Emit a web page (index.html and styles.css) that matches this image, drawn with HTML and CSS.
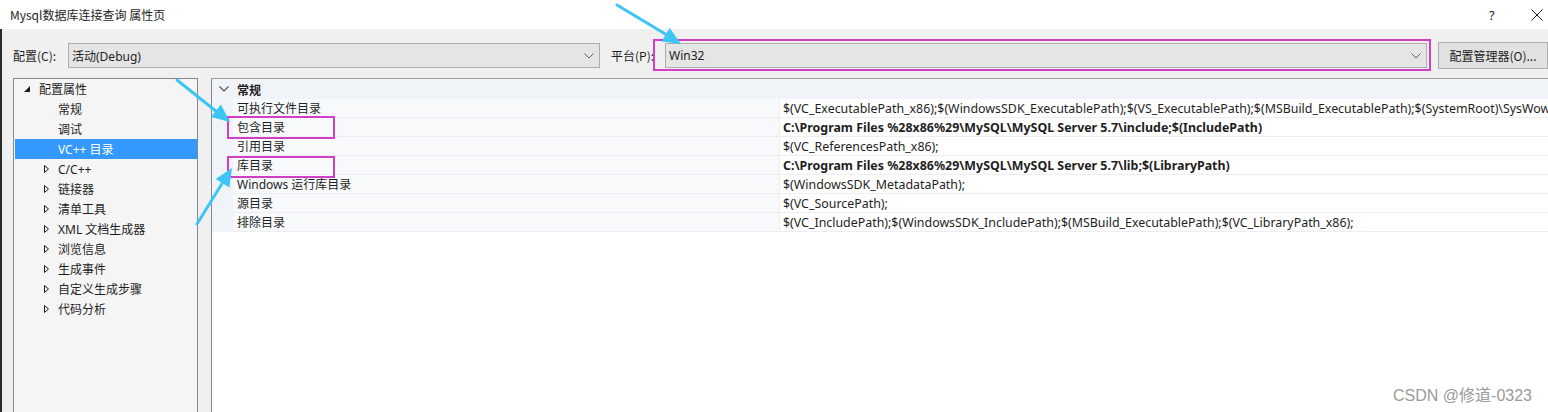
FILE: index.html
```html
<!DOCTYPE html>
<html lang="zh-CN">

<head>
  <meta charset="UTF-8">
  <title>Mysql数据库连接查询 属性页</title>
  <link rel="stylesheet" href="styles.css">
</head>

<body>
  <div class="dialog">
    <div class="titlebar">
      <span class="title">Mysql数据库连接查询 属性页</span>
      <span class="help">?</span>
      <span class="close">
        <svg width="12" height="12" viewBox="0 0 12 12">
          <path d="M0.5 0.5L11.5 11.5M11.5 0.5L0.5 11.5" stroke="#1e1e1e" stroke-width="1" fill="none" />
        </svg>
      </span>
    </div>

    <div class="content">
      <div class="toolbar">
        <label class="label label-config">配置(C):</label>
        <div class="combo combo-config">
          <span class="combo-text">活动(Debug)</span>
          <svg class="chevron" width="10" height="6" viewBox="0 0 10 6">
            <path d="M0.5 0.5L5 5L9.5 0.5" stroke="#606060" fill="none" />
          </svg>
        </div>
        <label class="label label-platform">平台(P):</label>
        <div class="combo combo-platform">
          <span class="combo-text">Win32</span>
          <svg class="chevron" width="10" height="6" viewBox="0 0 10 6">
            <path d="M0.5 0.5L5 5L9.5 0.5" stroke="#606060" fill="none" />
          </svg>
        </div>
        <button class="btn">配置管理器(O)...</button>
      </div>

      <div class="panes">
        <!-- left tree -->
        <div class="tree">
          <div class="tree-item root">
            <svg class="twisty" width="6" height="6" viewBox="0 0 6 6">
              <polygon points="6,0 6,6 0,6" fill="#1e1e1e" />
            </svg>
            <span>配置属性</span>
          </div>
          <div class="tree-item child"><span>常规</span></div>
          <div class="tree-item child"><span>调试</span></div>
          <div class="tree-item child selected"><span>VC++ 目录</span></div>
          <div class="tree-item child collapsed"><svg class="twisty" width="5" height="8" viewBox="0 0 5 8"><polygon points="0.5,0.5 4.5,4 0.5,7.5" fill="none" stroke="#1e1e1e" /></svg><span>C/C++</span></div>
          <div class="tree-item child collapsed"><svg class="twisty" width="5" height="8" viewBox="0 0 5 8"><polygon points="0.5,0.5 4.5,4 0.5,7.5" fill="none" stroke="#1e1e1e" /></svg><span>链接器</span></div>
          <div class="tree-item child collapsed"><svg class="twisty" width="5" height="8" viewBox="0 0 5 8"><polygon points="0.5,0.5 4.5,4 0.5,7.5" fill="none" stroke="#1e1e1e" /></svg><span>清单工具</span></div>
          <div class="tree-item child collapsed"><svg class="twisty" width="5" height="8" viewBox="0 0 5 8"><polygon points="0.5,0.5 4.5,4 0.5,7.5" fill="none" stroke="#1e1e1e" /></svg><span>XML 文档生成器</span></div>
          <div class="tree-item child collapsed"><svg class="twisty" width="5" height="8" viewBox="0 0 5 8"><polygon points="0.5,0.5 4.5,4 0.5,7.5" fill="none" stroke="#1e1e1e" /></svg><span>浏览信息</span></div>
          <div class="tree-item child collapsed"><svg class="twisty" width="5" height="8" viewBox="0 0 5 8"><polygon points="0.5,0.5 4.5,4 0.5,7.5" fill="none" stroke="#1e1e1e" /></svg><span>生成事件</span></div>
          <div class="tree-item child collapsed"><svg class="twisty" width="5" height="8" viewBox="0 0 5 8"><polygon points="0.5,0.5 4.5,4 0.5,7.5" fill="none" stroke="#1e1e1e" /></svg><span>自定义生成步骤</span></div>
          <div class="tree-item child collapsed"><svg class="twisty" width="5" height="8" viewBox="0 0 5 8"><polygon points="0.5,0.5 4.5,4 0.5,7.5" fill="none" stroke="#1e1e1e" /></svg><span>代码分析</span></div>
        </div>

        <!-- property grid -->
        <div class="grid">
          <div class="grid-row header">
            <div class="cell gutter">
              <svg width="10" height="6" viewBox="0 0 10 6">
                <path d="M0.5 0.5L5 5L9.5 0.5" stroke="#505050" stroke-width="1.2" fill="none" />
              </svg>
            </div>
            <div class="cell section-name">常规</div>
          </div>
          <div class="grid-row">
            <div class="cell gutter"></div>
            <div class="cell name">可执行文件目录</div>
            <div class="cell value">$(VC_ExecutablePath_x86);$(WindowsSDK_ExecutablePath);$(VS_ExecutablePath);$(MSBuild_ExecutablePath);$(SystemRoot)\SysWow64;$(FxCopDir);$(PATH);</div>
          </div>
          <div class="grid-row">
            <div class="cell gutter"></div>
            <div class="cell name">包含目录</div>
            <div class="cell value bold">C:\Program Files %28x86%29\MySQL\MySQL Server 5.7\include;$(IncludePath)</div>
          </div>
          <div class="grid-row">
            <div class="cell gutter"></div>
            <div class="cell name">引用目录</div>
            <div class="cell value">$(VC_ReferencesPath_x86);</div>
          </div>
          <div class="grid-row">
            <div class="cell gutter"></div>
            <div class="cell name">库目录</div>
            <div class="cell value bold">C:\Program Files %28x86%29\MySQL\MySQL Server 5.7\lib;$(LibraryPath)</div>
          </div>
          <div class="grid-row">
            <div class="cell gutter"></div>
            <div class="cell name">Windows 运行库目录</div>
            <div class="cell value">$(WindowsSDK_MetadataPath);</div>
          </div>
          <div class="grid-row">
            <div class="cell gutter"></div>
            <div class="cell name">源目录</div>
            <div class="cell value">$(VC_SourcePath);</div>
          </div>
          <div class="grid-row">
            <div class="cell gutter"></div>
            <div class="cell name">排除目录</div>
            <div class="cell value">$(VC_IncludePath);$(WindowsSDK_IncludePath);$(MSBuild_ExecutablePath);$(VC_LibraryPath_x86);</div>
          </div>
        </div>
      </div>
    </div>

    <!-- screenshot annotations drawn over the dialog -->
    <svg class="annotations" width="1548" height="412" viewBox="0 0 1548 412">
      <g fill="none" stroke="#d03fc6" stroke-width="2">
        <rect x="654" y="40" width="776" height="30" />
        <rect x="228" y="117" width="106" height="21" />
        <rect x="228" y="157" width="106" height="20" />
      </g>
      <g stroke="#3dc5f6" stroke-width="3" stroke-linecap="round">
        <line x1="617" y1="5" x2="667" y2="35" />
        <line x1="177" y1="80" x2="217" y2="112" />
        <line x1="197" y1="224" x2="223" y2="182" />
      </g>
      <g fill="#3dc5f6">
        <polygon points="681,44 661.5,41.5 669.7,27.9" />
        <polygon points="230,122 210.9,117.1 220.9,104.5" />
        <polygon points="232,168 229.3,187.5 215.7,179.1" />
      </g>
    </svg>

    <div class="watermark">CSDN @修道-0323</div>
  </div>
</body>

</html>
```

FILE: styles.css
```css
* {
  margin: 0;
  padding: 0;
  box-sizing: border-box;
}

body {
  width: 1548px;
  height: 412px;
  overflow: hidden;
  background: #ffffff;
  color: #1e1e1e;
  font-family: "Noto Sans", "Noto Sans CJK SC", sans-serif;
  font-size: 12px;
}

.dialog {
  position: relative;
  height: 412px;
  display: flex;
  flex-direction: column;
}

/* Title bar */
.titlebar {
  height: 29px;
  flex-shrink: 0;
  display: flex;
  align-items: center;
  padding-left: 10px;
  background: #ffffff;
}

.title {
  flex: 1;
  font-family: "Noto Sans CJK SC", sans-serif;
}

.help {
  width: 7px;
  margin-right: 35px;
  font-size: 13px;
}

.close {
  display: flex;
  margin-right: 5px;
}

/* Dialog body */
.content {
  flex: 1;
  display: flex;
  flex-direction: column;
  background: #f0f0f0;
  border-left: 2px solid #2b2b2b;
  padding: 14px 0 0 11px;
  min-height: 0;
}

.toolbar {
  height: 25px;
  display: flex;
  align-items: center;
  flex-shrink: 0;
}

.label {
  font-family: "Noto Sans CJK SC", sans-serif;
}

.label-config {
  width: 55px;
}

.label-platform {
  width: 54px;
  margin-left: 11px;
}

.combo {
  height: 25px;
  display: flex;
  align-items: center;
  background: #e5e5e5;
  border: 1px solid #adadad;
  padding: 0 5px 0 3px;
}

.combo-config {
  width: 532px;
}

.combo-platform {
  width: 762px;
}

.combo-text {
  flex: 1;
}

.chevron {
  display: block;
}

.btn {
  width: 110px;
  height: 27px;
  margin-left: 11px;
  background: #e1e1e1;
  border: 1px solid #adadad;
  color: #1e1e1e;
  font-family: "Noto Sans CJK SC", sans-serif;
  font-size: 12px;
}

/* Panes */
.panes {
  flex: 1;
  display: flex;
  gap: 13px;
  margin-top: 10px;
  min-height: 0;
}

.tree {
  width: 185px;
  flex-shrink: 0;
  background: #f5f5f5;
  border: 1px solid #828790;
  border-bottom: none;
  padding-left: 1px;
}

.tree-item {
  height: 20px;
  display: flex;
  align-items: center;
  white-space: nowrap;
}

.tree-item.root {
  padding-left: 9px;
}

.tree-item.root .twisty {
  margin-right: 9px;
}

.tree-item.child {
  padding-left: 43px;
}

.tree-item.collapsed {
  padding-left: 29px;
}

.tree-item.collapsed .twisty {
  margin-right: 9px;
}

.tree-item.selected {
  background: #3399ff;
  color: #ffffff;
}

.grid {
  flex: 1;
  background: #ffffff;
  border-top: 1px solid #a0a0a0;
  border-left: 1px solid #828790;
  overflow: hidden;
}

.grid-row {
  display: flex;
  height: 19px;
}

.grid-row.header {
  height: 20px;
  background: #f0f3f7;
}

.cell {
  display: flex;
  align-items: center;
  white-space: nowrap;
  overflow: hidden;
}

.gutter {
  width: 21px;
  flex-shrink: 0;
  background: #f0f3f7;
  justify-content: center;
  padding-left: 2px;
}

.section-name {
  font-weight: bold;
  padding-left: 4px;
  font-family: "Noto Sans CJK SC", sans-serif;
}

.name {
  width: 546px;
  flex-shrink: 0;
  padding-left: 4px;
  background: #f8f9fb;
  border-bottom: 1px solid #eceef1;
}

.value {
  flex: 1;
  padding-left: 3px;
  font-size: 12.4px;
  border-left: 1px solid #eceef1;
  border-bottom: 1px solid #eceef1;
}

.value.bold {
  font-weight: bold;
}

/* Overlays */
.annotations {
  position: absolute;
  top: 0;
  left: 0;
  pointer-events: none;
}

.watermark {
  position: absolute;
  right: 16px;
  bottom: 6px;
  color: #9a9a9a;
  font-size: 16px;
  font-family: "Liberation Sans", "Noto Sans CJK SC", sans-serif;
}
```
